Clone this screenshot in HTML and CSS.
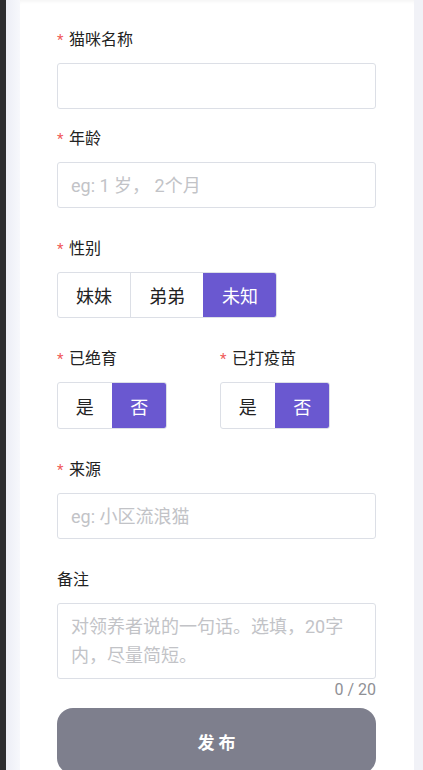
FILE: index.html
```html
<!DOCTYPE html>
<html lang="zh-CN">
<head>
  <meta charset="UTF-8">
  <meta name="viewport" content="width=device-width, initial-scale=1.0">
  <title>发布猫咪</title>
  <link rel="stylesheet" href="styles.css">
</head>
<body>
  <div class="screen">
    <div class="edge-dark"></div>
    <div class="gutter-left"></div>

    <form class="card">
      <div class="field field-first">
        <label class="field-label required">猫咪名称</label>
        <input class="text-input" type="text">
      </div>

      <div class="field field-second">
        <label class="field-label required">年龄</label>
        <input class="text-input" type="text" placeholder="eg: 1 岁， 2个月">
      </div>

      <div class="field">
        <label class="field-label required">性别</label>
        <div class="segmented seg-gender">
          <span class="seg">妹妹</span>
          <span class="seg">弟弟</span>
          <span class="seg active">未知</span>
        </div>
      </div>

      <div class="field field-pair">
        <div>
          <label class="field-label required">已绝育</label>
          <div class="segmented seg-yesno">
            <span class="seg">是</span>
            <span class="seg active">否</span>
          </div>
        </div>
        <div>
          <label class="field-label required">已打疫苗</label>
          <div class="segmented seg-yesno">
            <span class="seg">是</span>
            <span class="seg active">否</span>
          </div>
        </div>
      </div>

      <div class="field">
        <label class="field-label required">来源</label>
        <input class="text-input" type="text" placeholder="eg: 小区流浪猫">
      </div>

      <div class="field">
        <label class="field-label">备注</label>
        <textarea class="text-area" rows="2" placeholder="对领养者说的一句话。选填，20字内，尽量简短。"></textarea>
        <div class="counter">0 / 20</div>
      </div>

      <button class="submit-button" type="button">发布</button>
    </form>

    <div class="gutter-right"></div>
  </div>
</body>
</html>
```

FILE: styles.css
```css
body {
  margin: 0;
  padding: 0;
  font-family: Roboto, "Noto Sans CJK SC", sans-serif;
  color: #222;
  background-color: #f3f4f8;
}

.screen {
  display: flex;
  height: 770px;
  overflow: hidden;
}

.edge-dark {
  width: 6px;
  background-color: #2c2d30;
}

.gutter-left {
  width: 14px;
  background: linear-gradient(to right, #eceef6, #f7f8fc);
}

.gutter-right {
  width: 9px;
  background-color: #f1f2f7;
}

.card {
  flex: 1;
  display: flex;
  flex-direction: column;
  padding: 29px 38px 0 37px;
  background-color: #fff;
  box-shadow: inset 0 4px 4px -3px rgba(0, 0, 0, 0.06);
}

.field {
  display: flex;
  flex-direction: column;
  margin-top: 30px;
}

.field-first {
  margin-top: 0;
}

.field-second {
  margin-top: 19px;
}

.field-label {
  display: block;
  height: 22px;
  line-height: 22px;
  margin-bottom: 12px;
  font-size: 16px;
  color: #222;
}

.required::before {
  content: "*";
  display: inline-block;
  width: 12px;
  font-size: 15px;
  color: #f05a5a;
  vertical-align: top;
}

.text-input {
  box-sizing: border-box;
  height: 46px;
  padding: 0 13px;
  border: 1px solid #dcdfe6;
  border-radius: 3px;
  font-family: inherit;
  font-size: 18px;
  color: #222;
  outline: none;
}

.text-input::placeholder,
.text-area::placeholder {
  color: #c2c3c7;
}

.field-pair {
  display: grid;
  grid-template-columns: 163px 1fr;
}

.segmented {
  display: flex;
  border: 1px solid #dcdfe6;
  border-radius: 3px;
  box-sizing: border-box;
  overflow: hidden;
}

.seg-gender {
  width: 220px;
  height: 46px;
}

.seg-yesno {
  width: 110px;
  height: 47px;
}

.seg {
  flex: 1;
  display: flex;
  align-items: center;
  justify-content: center;
  font-size: 18px;
  color: #222;
  border-left: 1px solid #dcdfe6;
}

.seg:first-child {
  border-left: none;
}

.seg.active {
  color: #fff;
  background-color: #6a58d0;
  border-left-color: #6a58d0;
}

.text-area {
  box-sizing: border-box;
  height: 76px;
  padding: 8px 13px;
  border: 1px solid #dcdfe6;
  border-radius: 3px;
  font-family: inherit;
  font-size: 18px;
  line-height: 29px;
  resize: none;
  outline: none;
}

.counter {
  margin-top: 1px;
  height: 20px;
  line-height: 20px;
  text-align: right;
  font-size: 16px;
  color: #8f9095;
}

.submit-button {
  margin-top: 8px;
  height: 66px;
  flex-shrink: 0;
  border: none;
  border-radius: 16px;
  background-color: #7e7f8d;
  color: #fff;
  font-family: inherit;
  font-size: 17px;
  font-weight: bold;
  letter-spacing: 4px;
  text-indent: 4px;
}
```
